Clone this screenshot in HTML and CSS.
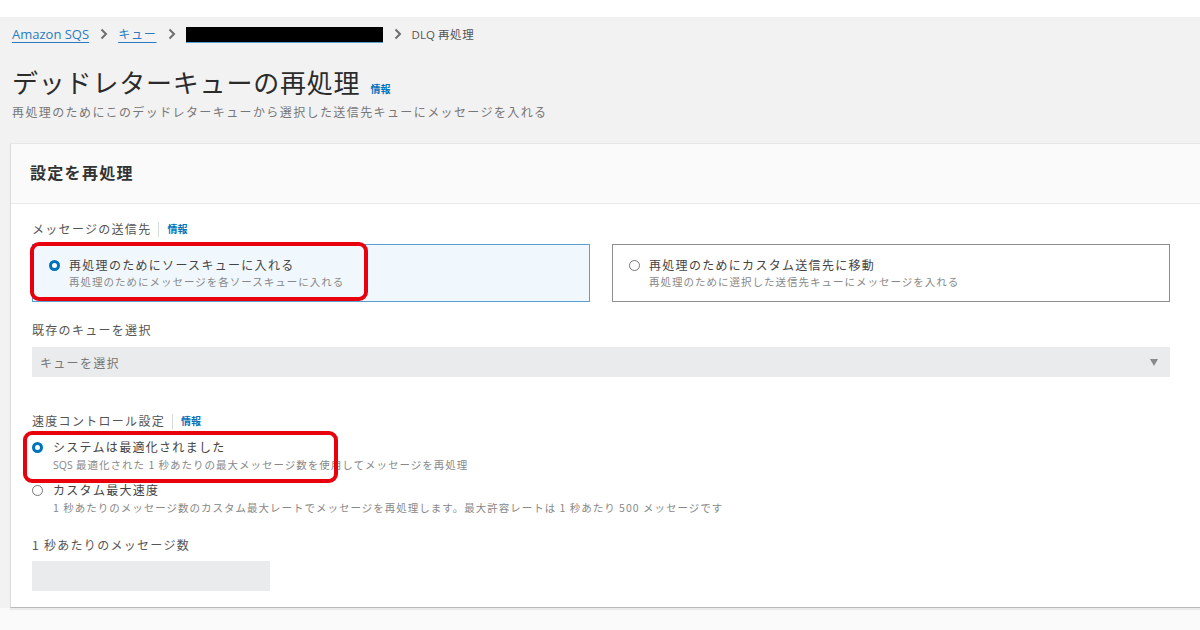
FILE: index.html
```html
<!DOCTYPE html>
<html lang="ja">
<head>
    <meta charset="UTF-8">
    <meta name="viewport" content="width=device-width, initial-scale=1.0">
    <title>DLQ 再処理</title>
    <link rel="stylesheet" href="styles.css">
</head>
<body>

    <div class="top-strip"></div>

    <div class="page">
        <nav class="crumbs">
            <a href="#" class="crumb-link latin">Amazon SQS</a>
            <svg class="chev" viewBox="0 0 8 12"><path d="M1.5 1.5 L6 6 L1.5 10.5"/></svg>
            <a href="#" class="crumb-link">キュー</a>
            <svg class="chev" viewBox="0 0 8 12"><path d="M1.5 1.5 L6 6 L1.5 10.5"/></svg>
            <a href="#" class="crumb-link redacted"></a>
            <svg class="chev" viewBox="0 0 8 12"><path d="M1.5 1.5 L6 6 L1.5 10.5"/></svg>
            <span class="crumb-current"><span class="latin">DLQ</span> 再処理</span>
        </nav>

        <h1 class="page-title">デッドレターキューの再処理<a href="#" class="info info-title">情報</a></h1>
        <p class="page-desc">再処理のためにこのデッドレターキューから選択した送信先キューにメッセージを入れる</p>

        <section class="card">
            <header class="card-head">
                <h2>設定を再処理</h2>
            </header>

            <div class="card-body">
                <!-- 送信先 -->
                <div class="field-label">メッセージの送信先<span class="sep"></span><a href="#" class="info">情報</a></div>
                <div class="tiles">
                    <label class="tile selected">
                        <span class="radio on"></span>
                        <span class="tile-text">
                            <span class="opt-title">再処理のためにソースキューに入れる</span>
                            <span class="opt-desc">再処理のためにメッセージを各ソースキューに入れる</span>
                        </span>
                    </label>
                    <label class="tile">
                        <span class="radio"></span>
                        <span class="tile-text">
                            <span class="opt-title">再処理のためにカスタム送信先に移動</span>
                            <span class="opt-desc">再処理のために選択した送信先キューにメッセージを入れる</span>
                        </span>
                    </label>
                    <span class="mark mark-tile"></span>
                </div>

                <!-- キュー選択 -->
                <div class="field-label gap-top">既存のキューを選択</div>
                <div class="select">
                    <span>キューを選択</span>
                    <span class="caret"></span>
                </div>

                <!-- 速度 -->
                <div class="field-label gap-top-lg">速度コントロール設定<span class="sep"></span><a href="#" class="info">情報</a></div>
                <div class="radio-group">
                    <label class="radio-row">
                        <span class="radio on"></span>
                        <span class="tile-text">
                            <span class="opt-title">システムは最適化されました</span>
                            <span class="opt-desc"><span class="latin">SQS</span> 最適化された 1 秒あたりの最大メッセージ数を使用してメッセージを再処理</span>
                        </span>
                    </label>
                    <label class="radio-row">
                        <span class="radio"></span>
                        <span class="tile-text">
                            <span class="opt-title">カスタム最大速度</span>
                            <span class="opt-desc">1 秒あたりのメッセージ数のカスタム最大レートでメッセージを再処理します。最大許容レートは 1 秒あたり 500 メッセージです</span>
                        </span>
                    </label>
                    <span class="mark mark-speed"></span>
                </div>

                <div class="field-label gap-top-md">1 秒あたりのメッセージ数</div>
                <div class="input"></div>
            </div>
        </section>
    </div>

</body>
</html>
```

FILE: styles.css
```css
/* base */

* {
  box-sizing: border-box;
}
html, body {
  margin: 0;
}
body {
  width: 1200px;
  height: 630px;
  overflow: hidden;
  background: #fafafa;
  color: #444;
  font-family: "Noto Sans CJK JP", "Noto Sans", sans-serif;
}
a {
  text-decoration: none;
}
.latin {
  font-family: "Open Sans", "Noto Sans", sans-serif;
  letter-spacing: 0;
}
.top-strip {
  height: 17px;
  background: #fff;
}
.page {
  background: #f2f2f2;
  padding: 9px 0 0 10px;
}

/* breadcrumb */

.crumbs {
  display: flex;
  align-items: center;
  height: 16px;
  padding-left: 2px;
  font-size: 12px;
  line-height: 16px;
}
.crumb-link {
  color: #2a7cc0;
  text-decoration: underline;
  text-underline-offset: 3px;
  letter-spacing: 0.8px;
}
.crumb-link.latin {
  font-size: 13px;
  letter-spacing: 0;
}
.redacted {
  display: block;
  width: 197px;
  height: 16px;
  margin-top: 1px;
  background: #000;
  border-bottom: 1px solid #5a9fd4;
}
.chev {
  width: 8px;
  height: 12px;
  margin: 0 10px 0 11px;
  fill: none;
  stroke: #6f6f6f;
  stroke-width: 2;
}
.crumb-current {
  color: #555;
  font-size: 11.5px;
  letter-spacing: 0.6px;
}

/* heading */

.page-title {
  display: flex;
  align-items: baseline;
  margin: 24px 0 0 2px;
  font-size: 26px;
  line-height: 32px;
  font-weight: 400;
  letter-spacing: 0.8px;
  color: #2b2b2b;
}
.info {
  color: #0073bb;
  font-size: 10px;
  line-height: 14px;
  font-weight: 700;
  letter-spacing: 0;
}
.info-title {
  margin-left: 10px;
}
.page-desc {
  margin: 6px 0 0 2px;
  font-size: 12px;
  line-height: 16px;
  letter-spacing: 1.4px;
  color: #777;
}

/* card */

.card {
  margin-top: 23px;
  background: #fff;
  border-top: 1px solid #e6e6e6;
  border-left: 1px solid #dcdcdc;
  border-bottom: 1px solid #b9b9b9;
  box-shadow: 0 2px 1px rgba(0, 0, 0, 0.06);
}
.card-head {
  background: #fafafa;
  padding: 17px 19px 20px;
  border-bottom: 1px solid #e9ebeb;
}
.card-head h2 {
  margin: 0;
  font-size: 16px;
  line-height: 22px;
  font-weight: 700;
  letter-spacing: 1.3px;
  color: #333;
}
.card-body {
  padding: 17px 30px 16px 21px;
}
.field-label {
  display: flex;
  align-items: center;
  font-size: 12px;
  line-height: 16px;
  letter-spacing: 1.3px;
  color: #555;
}
.gap-top {
  margin-top: 20px;
}
.gap-top-lg {
  margin-top: 36px;
}
.gap-top-md {
  margin-top: 22px;
}
.sep {
  width: 1px;
  height: 15px;
  background: #d5dbdb;
  margin: 0 8px 0 7px;
}

/* radio tiles */

.tiles {
  position: relative;
  display: grid;
  grid-template-columns: 1fr 1fr;
  gap: 22px;
  margin-top: 7px;
}
.tile {
  display: flex;
  align-items: flex-start;
  gap: 9px;
  padding: 12px 16px;
  height: 58px;
  border: 1px solid #8e8e8e;
  background: #fff;
}
.tile.selected {
  background: #f1f8fd;
  border-color: #5a9fd4;
}
.radio {
  flex: none;
  width: 11px;
  height: 11px;
  margin-top: 3px;
  border-radius: 50%;
  border: 1.5px solid #777;
  background: #fff;
}
.radio.on {
  border: 3.5px solid #0073bb;
}
.tile-text {
  display: flex;
  flex-direction: column;
}
.opt-title {
  font-size: 12px;
  line-height: 16px;
  letter-spacing: 1.3px;
  color: #444;
}
.opt-desc {
  margin-top: 2px;
  font-size: 10.5px;
  line-height: 14px;
  letter-spacing: 1px;
  color: #888;
}

/* select / input */

.select {
  display: flex;
  align-items: center;
  justify-content: space-between;
  height: 30px;
  margin-top: 9px;
  padding: 0 12px 0 8px;
  background: #eaebec;
  font-size: 12px;
  letter-spacing: 1.3px;
  color: #777;
}
.caret {
  width: 0;
  height: 0;
  border-left: 4.5px solid transparent;
  border-right: 4.5px solid transparent;
  border-top: 7px solid #8a8a8a;
}
.input {
  width: 238px;
  height: 30px;
  margin-top: 8px;
  background: #eaebec;
}

/* speed radios */

.radio-group {
  position: relative;
  margin-top: 10px;
}
.radio-row {
  display: flex;
  align-items: flex-start;
  gap: 10px;
}
.radio-row + .radio-row {
  margin-top: 10px;
}
.radio-row .opt-desc {
  margin-top: 3px;
}

/* red annotation boxes */

.mark {
  position: absolute;
  border: 4px solid #e8000d;
  border-radius: 9px;
  pointer-events: none;
}
.mark-tile {
  left: -2px;
  top: -2px;
  width: 338px;
  height: 59px;
}
.mark-speed {
  left: -9px;
  top: -8px;
  width: 315px;
  height: 52px;
}
```
